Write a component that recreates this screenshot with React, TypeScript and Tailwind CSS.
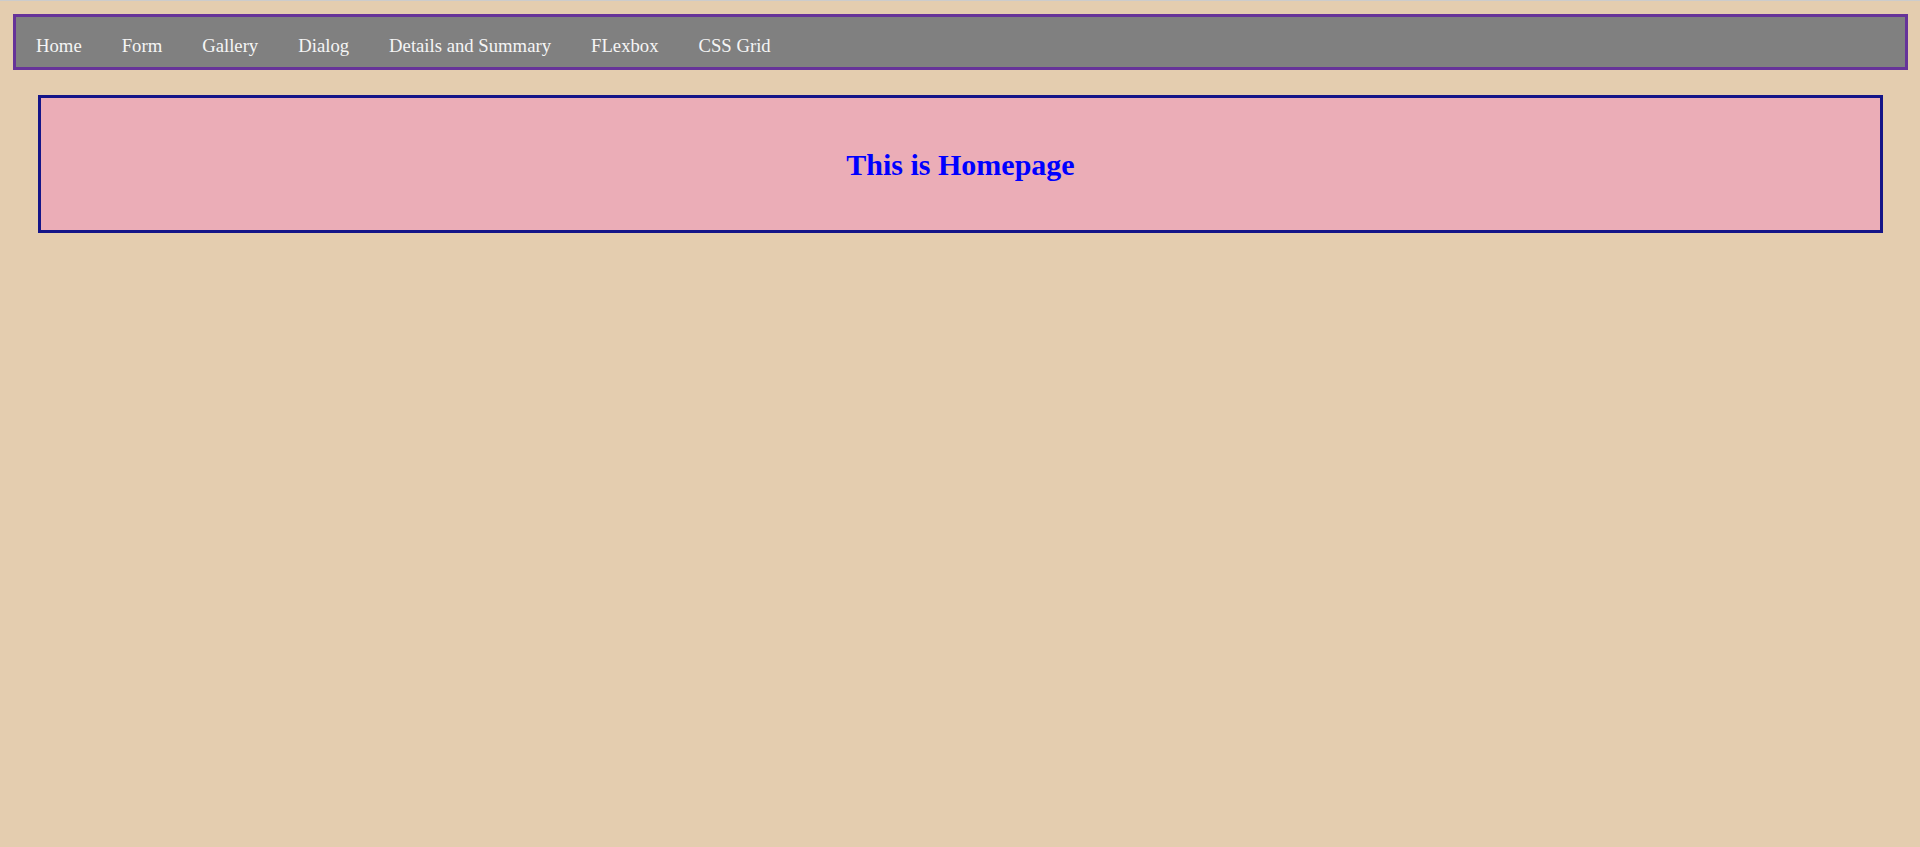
import React from 'react';

const links = ['Home', 'Form', 'Gallery', 'Dialog', 'Details and Summary', 'FLexbox', 'CSS Grid'];

const App: React.FC = () => {
    return (
        <div className="min-h-screen bg-[#e4cdaf] border-t border-[#cccccc] pt-[13px] font-['Liberation_Serif',serif]">
            <nav className="mx-[13px] mr-[12px] h-[56px] border-[3px] border-[#663399] bg-[#808080] flex items-center px-0">
                {links.map((link) => (
                    <a key={link} href="#" className="px-[20px] pt-[8px] text-[18.7px] text-[#f5f5f5] leading-none">
                        {link}
                    </a>
                ))}
            </nav>

            <div className="mt-[25px] ml-[38px] mr-[37px] h-[138px] border-[3px] border-[#141488] bg-[#ebadb7] flex items-center justify-center">
                <h2 className="text-[30px] font-bold text-[#0000ff] pt-[1px]">This is Homepage</h2>
            </div>
        </div>
    );
};

export default App;
